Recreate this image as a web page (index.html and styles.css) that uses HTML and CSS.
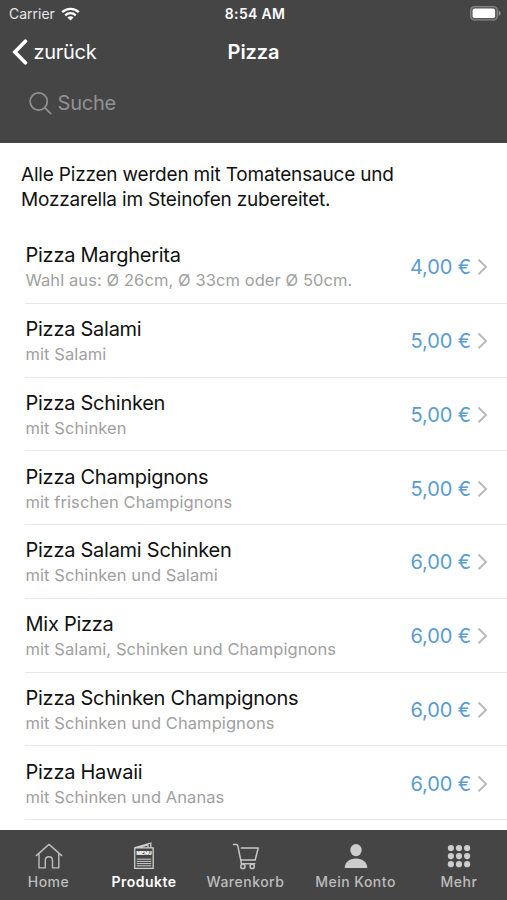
FILE: index.html
```html
<!DOCTYPE html>
<html lang="de">
<head>
<meta charset="utf-8">
<title>Pizza</title>
<link rel="stylesheet" href="styles.css">
</head>
<body>
<div class="app">
  <header class="header">
    <div class="status">
      <div class="carrier"><span>Carrier</span>
        <svg class="wifi" viewBox="0 0 19 14" fill="none" stroke="#fff" stroke-width="2.3"><path d="M1.2 5.2C5.9.8 13.1.8 17.8 5.2M4.2 8.3c3-2.8 7.6-2.8 10.6 0"/><path d="M6.4 10.5c1.7-1.6 4.5-1.6 6.2 0L9.5 13.6z" fill="#fff" stroke="none"/></svg>
      </div>
      <span class="time">8:54 AM</span>
      <svg class="battery" viewBox="0 0 31 15"><rect x=".7" y=".7" width="26.6" height="13.2" rx="3.6" fill="#555" stroke="#858585" stroke-width="1.3"/><rect x="2.6" y="2.6" width="22.5" height="9.5" rx="1.8" fill="#fff"/><path d="M28.7 4.8c2.5 1 2.5 4 0 5z" fill="#959595"/></svg>
    </div>
    <nav class="nav">
      <a class="back"><svg class="back-icon" viewBox="0 0 16 26" fill="none" stroke="#fff" stroke-width="3.7" stroke-linecap="round" stroke-linejoin="miter"><path d="M13.4 2.3 2.9 13l10.5 10.7"/></svg><span>zurück</span></a>
      <h1 class="title">Pizza</h1>
      <span></span>
    </nav>
    <div class="search"><svg class="search-icon" viewBox="0 0 23 23" fill="none" stroke="#929292" stroke-width="1.7" stroke-linecap="round"><circle cx="9.7" cy="9.5" r="8.6"/><path d="m16 15.8 5.7 5.8"/></svg><span>Suche</span></div>
  </header>
  <main class="content">
    <p class="intro">Alle Pizzen werden mit Tomatensauce und<br>Mozzarella im Steinofen zubereitet.</p>
    <ul class="list">
      <li class="row"><div class="info"><div class="name">Pizza Margherita</div><div class="desc">Wahl aus: Ø 26cm, Ø 33cm oder Ø 50cm.</div></div><span class="price">4,00 €</span><svg class="chevron" viewBox="0 0 11 18"><path d="m1.5 1.5 7.5 7.4-7.5 7.4"/></svg></li>
      <li class="row"><div class="info"><div class="name">Pizza Salami</div><div class="desc">mit Salami</div></div><span class="price">5,00 €</span><svg class="chevron" viewBox="0 0 11 18"><path d="m1.5 1.5 7.5 7.4-7.5 7.4"/></svg></li>
      <li class="row"><div class="info"><div class="name">Pizza Schinken</div><div class="desc">mit Schinken</div></div><span class="price">5,00 €</span><svg class="chevron" viewBox="0 0 11 18"><path d="m1.5 1.5 7.5 7.4-7.5 7.4"/></svg></li>
      <li class="row"><div class="info"><div class="name">Pizza Champignons</div><div class="desc">mit frischen Champignons</div></div><span class="price">5,00 €</span><svg class="chevron" viewBox="0 0 11 18"><path d="m1.5 1.5 7.5 7.4-7.5 7.4"/></svg></li>
      <li class="row"><div class="info"><div class="name">Pizza Salami Schinken</div><div class="desc">mit Schinken und Salami</div></div><span class="price">6,00 €</span><svg class="chevron" viewBox="0 0 11 18"><path d="m1.5 1.5 7.5 7.4-7.5 7.4"/></svg></li>
      <li class="row"><div class="info"><div class="name">Mix Pizza</div><div class="desc">mit Salami, Schinken und Champignons</div></div><span class="price">6,00 €</span><svg class="chevron" viewBox="0 0 11 18"><path d="m1.5 1.5 7.5 7.4-7.5 7.4"/></svg></li>
      <li class="row"><div class="info"><div class="name">Pizza Schinken Champignons</div><div class="desc">mit Schinken und Champignons</div></div><span class="price">6,00 €</span><svg class="chevron" viewBox="0 0 11 18"><path d="m1.5 1.5 7.5 7.4-7.5 7.4"/></svg></li>
      <li class="row"><div class="info"><div class="name">Pizza Hawaii</div><div class="desc">mit Schinken und Ananas</div></div><span class="price">6,00 €</span><svg class="chevron" viewBox="0 0 11 18"><path d="m1.5 1.5 7.5 7.4-7.5 7.4"/></svg></li>
    </ul>
  </main>
  <nav class="tabs">
    <a class="tab"><svg class="tab-icon" viewBox="0 0 28 28" fill="none" stroke="#bdbdbd" stroke-width="1.4" stroke-linejoin="round" stroke-linecap="round"><path d="M1.3 13.6 14 2.4l12.7 11.2M4 11.5v14.4h6.3v-7.6c0-4.8 7.2-4.8 7.2 0v7.6h6.3V11.5"/></svg><span>Home</span></a>
    <a class="tab active"><svg class="tab-icon" viewBox="0 0 28 28" fill="none" stroke="#cecece"><path d="M4.7 5.9h18.5v20.4H4.7zM5 5.6 20.8 1v4.7M9 5.6l9-2.6v2.6" stroke-width="1.3"/><path d="M6.7 17.2h14.6M6.7 19.4h14.6M6.7 21.6h14.6M6.7 23.8h14.6" stroke-width="1"/><text class="menu-word" x="14" y="12.6">MENU</text></svg><span>Produkte</span></a>
    <a class="tab"><svg class="tab-icon" viewBox="0 0 28 28" fill="none" stroke="#c6c6c6" stroke-width="1.5" stroke-linecap="round" stroke-linejoin="round"><path d="M1.5 2.4h2.7c1 0 1.4.5 1.6 1.4l3.8 18.3M9.3 6H26.2l-3 12H9M9.2 21.8h13.6"/><circle cx="10.9" cy="24.4" r="2.1"/><circle cx="20.2" cy="24.4" r="2.1"/></svg><span>Warenkorb</span></a>
    <a class="tab"><svg class="tab-icon" viewBox="0 0 28 28" fill="#cdcdcd"><ellipse cx="14" cy="8.1" rx="5.7" ry="6.2"/><path d="M2.7 26c0-5.8 4.6-9.6 11.3-9.6S25.3 20.2 25.3 26z"/></svg><span>Mein Konto</span></a>
    <a class="tab"><svg class="tab-icon" viewBox="0 0 28 28" fill="#cdcdcd"><circle cx="5.9" cy="6" r="3.1"/><circle cx="14" cy="6" r="3.1"/><circle cx="22.1" cy="6" r="3.1"/><circle cx="5.9" cy="14.1" r="3.1"/><circle cx="14" cy="14.1" r="3.1"/><circle cx="22.1" cy="14.1" r="3.1"/><circle cx="5.9" cy="22.2" r="3.1"/><circle cx="14" cy="22.2" r="3.1"/><circle cx="22.1" cy="22.2" r="3.1"/></svg><span>Mehr</span></a>
  </nav>
</div>
</body>
</html>
```
FILE: styles.css
```css
* { box-sizing: border-box; }
body { margin: 0; font-family: Inter, "Liberation Sans", sans-serif; background: #fff; }
.app { width: 507px; height: 900px; display: flex; flex-direction: column; overflow: hidden; }
.header { height: 142.5px; flex: none; background: #454545; color: #fff; }
.status { height: 27px; padding: 0 6px 0 9px; display: grid; grid-template-columns: 1fr auto 1fr; align-items: center; }
.carrier { display: flex; align-items: center; gap: 6px; font-size: 14px; letter-spacing: 0; color: #e6e6e6; }
.wifi { width: 19px; height: 14px; }
.time { font-size: 14px; font-weight: 600; letter-spacing: .3px; }
.battery { width: 31px; height: 15px; justify-self: end; }
.nav { height: 50px; padding: 0 12px; display: grid; grid-template-columns: 1fr auto 1fr; align-items: center; }
.back { display: flex; align-items: center; gap: 5.5px; font-size: 20px; letter-spacing: -.3px; }
.back-icon { width: 16px; height: 26px; }
.title { margin: 0; font-size: 20px; font-weight: 600; letter-spacing: -.1px; }
.search { height: 52px; padding-left: 28.5px; display: flex; align-items: center; gap: 6px; color: #929292; font-size: 20px; letter-spacing: -.2px; }
.search-icon { width: 23px; height: 23px; }
.content { flex: 1; min-height: 0; }
.intro { margin: 0; height: 87.5px; padding: 20.8px 21px 0; font-size: 19px; line-height: 24.6px; letter-spacing: -.19px; color: #111; }
.list { list-style: none; margin: 0; padding: 0 0 0 25px; }
.row { height: 73.75px; display: flex; align-items: center; padding: 3px 19px 0 .5px; border-bottom: 1px solid #e9e9e9; }
.info { flex: 1; white-space: nowrap; }
.name { font-size: 20px; line-height: 26px; letter-spacing: -.26px; color: #111; }
.desc { font-size: 16.5px; line-height: 25px; letter-spacing: .08px; color: #a0a0a0; }
.price { font-size: 20px; line-height: 24px; padding-bottom: 1px; letter-spacing: -.1px; color: #5a9bd0; }
.chevron { width: 11px; height: 18px; margin: 0 0 1px 6px; fill: none; stroke: #b9b9b9; stroke-width: 2; }
.tabs { height: 70px; flex: none; padding: 12px 0 0; display: grid; grid-template-columns: 97px 94px 109px 111px 96px; background: #454545; }
.tab { display: flex; flex-direction: column; align-items: center; gap: 2.5px; font-size: 14px; line-height: 18px; font-weight: 500; letter-spacing: .5px; color: #bdbdbd; white-space: nowrap; }
.tab-icon { width: 28px; height: 28px; }
.active { color: #fff; font-weight: 600; }
.menu-word { font-family: Inter, sans-serif; font-size: 5px; font-weight: 800; text-anchor: middle; fill: #fff; stroke: #fff; stroke-width: .2px; letter-spacing: 0; }
```
